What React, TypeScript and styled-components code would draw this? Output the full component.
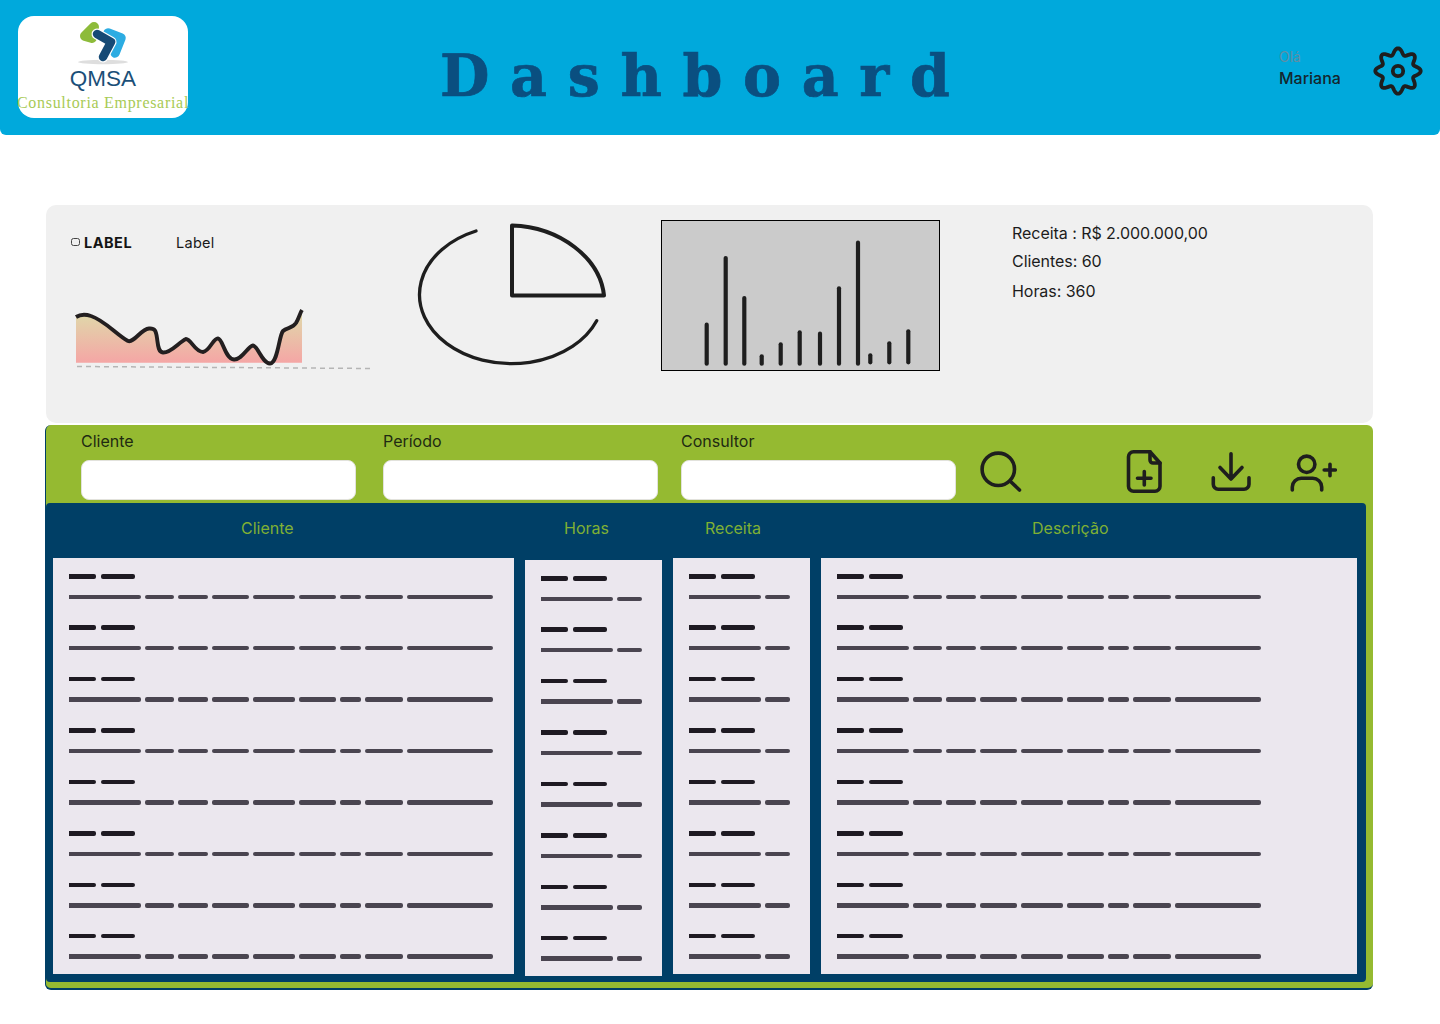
import React from "react";
import styled, { createGlobalStyle } from "styled-components";

const Global = createGlobalStyle`
  html, body { margin: 0; padding: 0; background: #fff; }
  body { font-family: Inter, "Liberation Sans", sans-serif; color: #1e1e1e; }
`;

const Page = styled.div`
  width: 1440px;
  height: 1024px;
  display: flex;
  flex-direction: column;
  overflow: hidden;
`;

const Header = styled.header`
  height: 135px;
  flex: none;
  background: #00a9dc;
  border-radius: 0 0 6px 6px;
  display: flex;
  align-items: flex-start;
`;

const LogoCard = styled.div`
  width: 170px;
  height: 102px;
  margin: 16px 0 0 18px;
  background: #fff;
  border-radius: 16px;
  display: flex;
  flex-direction: column;
  align-items: center;
  flex: none;
`;

const LogoMark = styled.svg`
  width: 60px;
  height: 46px;
  margin-top: 5px;
  flex: none;
`;

const LogoName = styled.div`
  font-family: "Liberation Sans", Arial, sans-serif;
  font-size: 22.5px;
  line-height: 22px;
  height: 22px;
  margin-top: 1px;
  color: #1b4f78;
`;

const LogoTag = styled.div`
  font-family: "Liberation Serif", serif;
  font-size: 16px;
  line-height: 18px;
  letter-spacing: 0.7px;
  color: #a8ca55;
  white-space: nowrap;
  margin-top: 4px;
`;

const Title = styled.h1`
  margin: 42px 0 0 252px;
  font-family: "DejaVu Serif", serif;
  font-weight: 700;
  font-size: 57px;
  line-height: 68px;
  letter-spacing: 20.65px;
  color: #0a4f80;
  -webkit-text-stroke: 0.7px #0a4f80;
  white-space: nowrap;
  width: 839px;
  flex: none;
`;

const Greeting = styled.div`
  margin-top: 47px;
  width: 94px;
  flex: none;
  display: flex;
  flex-direction: column;
`;

const Hello = styled.span`
  font-size: 14px;
  line-height: 20px;
  color: #5f8ea5;
`;

const UserName = styled.span`
  font-size: 16px;
  line-height: 22px;
  font-weight: 500;
  color: #14262e;
`;

const GearIcon = styled.svg`
  width: 50px;
  height: 50px;
  margin-top: 46px;
  flex: none;
`;

const Main = styled.main`
  padding: 70px 67px 0 45px;
  display: flex;
  flex-direction: column;
  gap: 2px;
`;

const StatsPanel = styled.section`
  height: 218px;
  margin-left: 1px;
  background: #f0f0f0;
  border-radius: 10px;
  display: flex;
  align-items: flex-start;
`;

const LineBlock = styled.div`
  width: 310px;
  margin-left: 24px;
  flex: none;
  display: flex;
  flex-direction: column;
`;

const Legend = styled.div`
  display: flex;
  align-items: center;
  height: 18px;
  margin-top: 28px;
  font-size: 14.500px;
`;

const LegendSwatch = styled.span`
  width: 9px;
  height: 8px;
  margin: 0 4px 0 1px;
  border: 1px solid #444;
  border-radius: 2.500px;
  box-sizing: border-box;
`;

const LegendStrong = styled.span`
  font-weight: 700;
  letter-spacing: 0.5px;
  width: 92px;
  color: #141414;
`;

const LegendPlain = styled.span`
  color: #1a1a1a;
  letter-spacing: 0.3px;
`;

const AreaChart = styled.svg`
  width: 310px;
  height: 80px;
  margin-top: 49px;
  display: block;
`;

const PieChart = styled.svg`
  width: 200px;
  height: 160px;
  margin: 14px 0 0 35px;
  flex: none;
`;

const BarBox = styled.div`
  width: 279px;
  height: 151px;
  margin: 15px 0 0 46px;
  flex: none;
  box-sizing: border-box;
  background: #cbcbcb;
  border: 1px solid #000;
`;

const BarSvg = styled.svg`
  width: 277px;
  height: 149px;
  display: block;
`;

const Summary = styled.div`
  margin: 16px 0 0 72px;
  display: flex;
  flex-direction: column;
  font-size: 16px;
  letter-spacing: -0.05px;
`;

const SummaryLine = styled.div<{ $h: number }>`
  height: ${(p) => p.$h}px;
  line-height: 24px;
  color: #1c1c1c;
`;

const WorkArea = styled.section`
  height: 565px;
  box-sizing: border-box;
  background: #95ba31;
  border-left: 1.5px solid #003f66;
  border-bottom: 2px solid #003f66;
  border-radius: 6px;
  display: flex;
  flex-direction: column;
`;

const FilterBar = styled.div`
  height: 78px;
  flex: none;
  padding-left: 35px;
  display: flex;
  align-items: flex-start;
  position: relative;
`;

const Field = styled.label<{ $mr: number }>`
  width: 275px;
  margin-right: ${(p) => p.$mr}px;
  flex: none;
  display: flex;
  flex-direction: column;
  gap: 8px;
  padding-top: 5px;
  font-size: 16px;
  line-height: 22px;
  color: #1f2a12;
`;

const FieldInput = styled.input`
  height: 40px;
  width: 100%;
  box-sizing: border-box;
  background: #fff;
  border: 1px solid #e2e2dc;
  border-radius: 8px;
  outline: none;
`;

const IconSvg = styled.svg<{ $w: number; $ml: number }>`
  width: ${(p) => p.$w}px;
  height: 50px;
  margin: 24px 0 0 ${(p) => p.$ml}px;
  flex: none;
`;

const Table = styled.div`
  width: 1320px;
  height: 479px;
  background: #003f66;
  border-radius: 4px;
  padding: 0 9px 8px 7px;
  box-sizing: border-box;
  display: flex;
  flex-direction: column;
`;

const HeaderRow = styled.div`
  height: 55px;
  flex: none;
  box-sizing: border-box;
  padding-bottom: 6px;
  display: flex;
  align-items: center;
`;

const HeaderCell = styled.div<{ $w: number }>`
  width: ${(p) => p.$w}px;
  flex: none;
  font-size: 16px;
  color: #7fb034;
`;

const Columns = styled.div`
  display: flex;
  gap: 11px;
  align-items: flex-start;
`;

const Column = styled.div<{ $w: number; $shift?: number }>`
  width: ${(p) => p.$w}px;
  height: 416px;
  margin-top: ${(p) => p.$shift ?? 0}px;
  flex: none;
  box-sizing: border-box;
  background: #ebe7ee;
  padding: 16px 0 0 16px;
`;

const Row = styled.div`
  height: 51.43px;
  display: flex;
  flex-direction: column;
  gap: 16px;
`;

const Line = styled.div<{ $gap: number }>`
  display: flex;
  gap: ${(p) => p.$gap}px;
`;

const Dash = styled.span<{ $w: number; $dark?: boolean }>`
  width: ${(p) => p.$w}px;
  height: 4.500px;
  flex: none;
  border-radius: 2px;
  background: ${(p) => (p.$dark ? "#1e1a22" : "#4a4550")};
  &:first-child {
    border-radius: 0 2px 2px 0;
  }
`;

const gearPath = (() => {
  const pts: string[] = [];
  for (let i = 0; i <= 240; i++) {
    const a = (i / 240) * Math.PI * 2;
    const r = 19.6 + 3.1 * Math.cos(8 * a);
    pts.push(`${(25 + r * Math.sin(a)).toFixed(2)} ${(25 - r * Math.cos(a)).toFixed(2)}`);
  }
  return `M${pts.join("L")}Z`;
})();

const BARS: [number, number, number][] = [
  [706.7, 322.7, 365.7], [725.7, 256, 365.7], [744.3, 296, 365.7], [761.7, 354.3, 365.7],
  [780.7, 342.3, 365.7], [799.7, 330.3, 365.7], [820, 331.7, 365.7], [839, 286.3, 365.7],
  [858, 240.7, 365.7], [870.3, 353.3, 364.3], [889.3, 341.3, 364.3], [908.3, 329.3, 364.3],
];

const LINE_D =
  "M76 317C80 314.500 85 314 91 316C104 320 117 335 128 341C134 343 141 329 149 328.500C155 328 156 331 157 338C158 345 158 352 163 352.500C171 353 179 342 186 339C191 339 195 352 203 352C210 351 213 338 218 338.500C223 339 225 359 234 359.500C242 360 248 346 253 345.500C258 346 262 363 270 363.500C278 363 279 335 283 331C287 327 292 329 296 323C299 318 300 313 302 310";

const LONG_FULL = [72, 29, 29.5, 37.5, 41.5, 37, 21, 38.5, 86];
const LONG_NARROW = [72, 25];

const SkeletonColumn: React.FC<{ w: number; long: number[]; shift?: number }> = ({ w, long, shift }) => (
  <Column $w={w} $shift={shift}>
    {Array.from({ length: 8 }).map((_, i) => (
      <Row key={i}>
        <Line $gap={5}>
          <Dash $w={27} $dark />
          <Dash $w={33.5} $dark />
        </Line>
        <Line $gap={4}>
          {long.map((d, j) => (
            <Dash key={j} $w={d} />
          ))}
        </Line>
      </Row>
    ))}
  </Column>
);

export default function App() {
  return (
    <Page>
      <Global />
      <Header>
        <LogoCard>
          <LogoMark viewBox="73 21 60 46">
            <ellipse cx="103" cy="62" rx="25" ry="2.200" fill="#dedede" />
            <path d="M94 27 85 36 92 38" stroke="#8dbb3a" strokeWidth="10" strokeLinecap="round" strokeLinejoin="round" fill="none" />
            <path d="M108 33 121 38 115 53" stroke="#2cace2" strokeWidth="9.500" strokeLinecap="round" strokeLinejoin="round" fill="none" />
            <path d="M97 34 111 42 103 57" stroke="#fff" strokeWidth="11" strokeLinecap="round" strokeLinejoin="round" fill="none" />
            <path d="M97 34 111 42 103 57" stroke="#164a75" strokeWidth="8.500" strokeLinecap="round" strokeLinejoin="round" fill="none" />
          </LogoMark>
          <LogoName>QMSA</LogoName>
          <LogoTag>Consultoria Empresarial</LogoTag>
        </LogoCard>
        <Title>Dashboard</Title>
        <Greeting>
          <Hello>Olá</Hello>
          <UserName>Mariana</UserName>
        </Greeting>
        <GearIcon viewBox="0 0 50 50" fill="none" stroke="#1e1e1e" strokeWidth="3.800">
          <path d={gearPath} strokeLinejoin="round" />
          <circle cx="25" cy="25" r="5.200" />
        </GearIcon>
      </Header>
      <Main>
        <StatsPanel>
          <LineBlock>
            <Legend>
              <LegendSwatch />
              <LegendStrong>LABEL</LegendStrong>
              <LegendPlain>Label</LegendPlain>
            </Legend>
            <AreaChart viewBox="70 300 310 80">
              <defs>
                <linearGradient id="areaFill" x1="0" y1="0" x2="0" y2="1">
                  <stop offset="0" stopColor="#dedcaa" />
                  <stop offset="1" stopColor="#f5a5a5" />
                </linearGradient>
              </defs>
              <path d={`${LINE_D}V362.700H76Z`} fill="url(#areaFill)" />
              <path d={LINE_D} fill="none" stroke="#231f20" strokeWidth="3.900" />
              <path d="M77 366.500 374 368.500" stroke="#b5b5b5" strokeWidth="1.500" strokeDasharray="5 4" fill="none" />
            </AreaChart>
          </LineBlock>
          <PieChart viewBox="415 219 200 160" fill="none" stroke="#1e1e1e" strokeLinecap="round" strokeLinejoin="round">
            <path d="M476 231A92 69 0 1 0 596.700 320.700" strokeWidth="3.300" />
            <path d="M512 225.500V295.500H604C600 258 560 227 512 225.500Z" strokeWidth="4" />
          </PieChart>
          <BarBox>
            <BarSvg viewBox="662 221 277 149" stroke="#1e1e1e" strokeWidth="4.200" strokeLinecap="round">
              {BARS.map(([x, a, b]) => (
                <line key={x} x1={x} x2={x} y1={a + 2} y2={b - 2} />
              ))}
            </BarSvg>
          </BarBox>
          <Summary>
            <SummaryLine $h={28}>Receita : R$ 2.000.000,00</SummaryLine>
            <SummaryLine $h={30}>Clientes: 60</SummaryLine>
            <SummaryLine $h={24}>Horas: 360</SummaryLine>
          </Summary>
        </StatsPanel>
        <WorkArea>
          <FilterBar>
            <Field $mr={27}>
              Cliente
              <FieldInput />
            </Field>
            <Field $mr={23}>
              Período
              <FieldInput />
            </Field>
            <Field $mr={1}>
              Consultor
              <FieldInput />
            </Field>
            <IconSvg $w={44} $ml={23} viewBox="0 0 44 50" fill="none" stroke="#1e1e1e" strokeWidth="3.600" strokeLinecap="round">
              <circle cx="18.300" cy="20.300" r="16.200" />
              <path d="M30 32 39.500 41" />
            </IconSvg>
            <IconSvg $w={40} $ml={100} viewBox="0 0 40 50" fill="none" stroke="#1e1e1e" strokeWidth="3.600" strokeLinecap="round" strokeLinejoin="round">
              <path d="M9.500 2.700H26L36 14V37.200A5 5 0 0 1 31 42.200H9.500A5 5 0 0 1 4.500 37.200V7.700A5 5 0 0 1 9.500 2.700Z" />
              <path d="M26 2.700V11A3 3 0 0 0 29 14H36" />
              <path d="M20.300 22.500V36M13.500 29.300H27" />
            </IconSvg>
            <IconSvg $w={44} $ml={44} viewBox="0 0 44 50" fill="none" stroke="#1e1e1e" strokeWidth="3.600" strokeLinecap="round" strokeLinejoin="round">
              <path d="M23 4.700V30M12 18.500 23 30 34 18.500" />
              <path d="M5.300 28.700V35.300A5 5 0 0 0 10.300 40.300H36A5 5 0 0 0 41 35.300V28.700" />
            </IconSvg>
            <IconSvg $w={50} $ml={35} viewBox="0 0 50 50" fill="none" stroke="#1e1e1e" strokeWidth="3.600" strokeLinecap="round" strokeLinejoin="round">
              <circle cx="19.700" cy="15.300" r="8.200" />
              <path d="M5.300 41V38A9 9 0 0 1 14.300 29.300H25.700A9 9 0 0 1 34.700 38V41" />
              <path d="M43 15.200V26.800M37.200 21H48.300" />
            </IconSvg>
          </FilterBar>
          <Table>
            <HeaderRow>
              <HeaderCell $w={188} />
              <HeaderCell $w={323}>Cliente</HeaderCell>
              <HeaderCell $w={141}>Horas</HeaderCell>
              <HeaderCell $w={327}>Receita</HeaderCell>
              <HeaderCell $w={200}>Descrição</HeaderCell>
            </HeaderRow>
            <Columns>
              <SkeletonColumn w={461} long={LONG_FULL} />
              <SkeletonColumn w={137} long={LONG_NARROW} shift={2} />
              <SkeletonColumn w={137} long={LONG_NARROW} />
              <SkeletonColumn w={536} long={LONG_FULL} />
            </Columns>
          </Table>
        </WorkArea>
      </Main>
    </Page>
  );
}
